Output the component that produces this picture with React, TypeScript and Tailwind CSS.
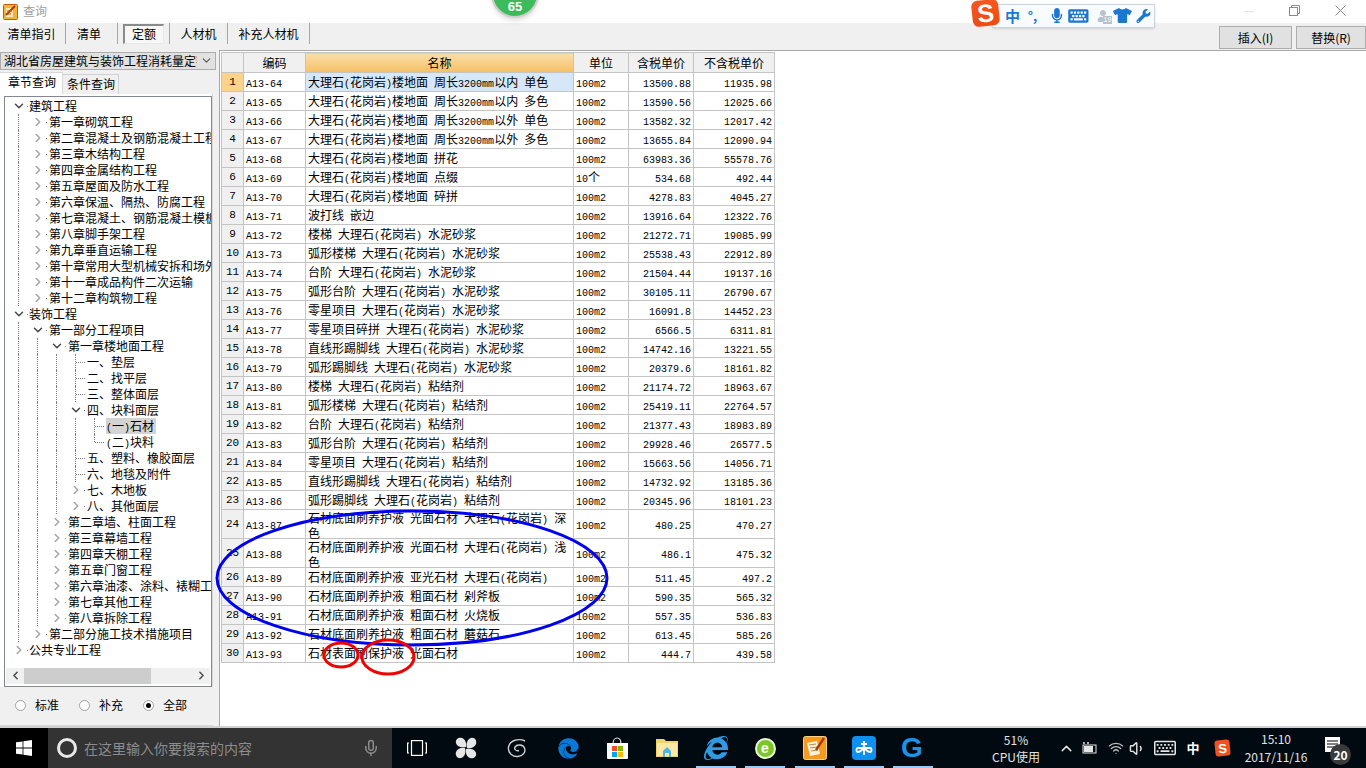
import { ChevronDown, ChevronRight, ChevronLeft, ChevronUp, Mic, Wifi, Volume1 } from 'lucide-react';
import { FaEdge, FaInternetExplorer, FaKeyboard, FaMicrophone, FaRegKeyboard, FaTshirt, FaWrench, FaUser } from 'react-icons/fa';

const cjk = { fontFamily: '"Noto Sans CJK SC", "Noto Sans", sans-serif' };

// half-width ascii runs, the reference uses a 6px wide bitmap font for these
function Mixed({ text }: { text: string }) {
  const parts = text.split(/([\x20-\x7e]+)/).filter(Boolean);
  return (
    <>
      {parts.map((p, i) =>
        /^[\x20-\x7e]+$/.test(p) ? (
          <span key={i} className="font-['Liberation_Mono'] text-[10px] leading-[10px] whitespace-pre-wrap">
            {p}
          </span>
        ) : (
          <span key={i} className="leading-[12px]">{p}</span>
        ),
      )}
    </>
  );
}

type TreeRow = { d: number; a: 'open' | 'closed' | 'none'; t: string; sel?: boolean };

const treeRows: TreeRow[] = [
  { d: 0, a: 'open', t: '建筑工程' },
  { d: 1, a: 'closed', t: '第一章砌筑工程' },
  { d: 1, a: 'closed', t: '第二章混凝土及钢筋混凝土工程' },
  { d: 1, a: 'closed', t: '第三章木结构工程' },
  { d: 1, a: 'closed', t: '第四章金属结构工程' },
  { d: 1, a: 'closed', t: '第五章屋面及防水工程' },
  { d: 1, a: 'closed', t: '第六章保温、隔热、防腐工程' },
  { d: 1, a: 'closed', t: '第七章混凝土、钢筋混凝土模板' },
  { d: 1, a: 'closed', t: '第八章脚手架工程' },
  { d: 1, a: 'closed', t: '第九章垂直运输工程' },
  { d: 1, a: 'closed', t: '第十章常用大型机械安拆和场外' },
  { d: 1, a: 'closed', t: '第十一章成品构件二次运输' },
  { d: 1, a: 'closed', t: '第十二章构筑物工程' },
  { d: 0, a: 'open', t: '装饰工程' },
  { d: 1, a: 'open', t: '第一部分工程项目' },
  { d: 2, a: 'open', t: '第一章楼地面工程' },
  { d: 3, a: 'none', t: '一、垫层' },
  { d: 3, a: 'none', t: '二、找平层' },
  { d: 3, a: 'none', t: '三、整体面层' },
  { d: 3, a: 'open', t: '四、块料面层' },
  { d: 4, a: 'none', t: '(一)石材', sel: true },
  { d: 4, a: 'none', t: '(二)块料' },
  { d: 3, a: 'none', t: '五、塑料、橡胶面层' },
  { d: 3, a: 'none', t: '六、地毯及附件' },
  { d: 3, a: 'closed', t: '七、木地板' },
  { d: 3, a: 'closed', t: '八、其他面层' },
  { d: 2, a: 'closed', t: '第二章墙、柱面工程' },
  { d: 2, a: 'closed', t: '第三章幕墙工程' },
  { d: 2, a: 'closed', t: '第四章天棚工程' },
  { d: 2, a: 'closed', t: '第五章门窗工程' },
  { d: 2, a: 'closed', t: '第六章油漆、涂料、裱糊工程' },
  { d: 2, a: 'closed', t: '第七章其他工程' },
  { d: 2, a: 'closed', t: '第八章拆除工程' },
  { d: 1, a: 'closed', t: '第二部分施工技术措施项目' },
  { d: 0, a: 'closed', t: '公共专业工程' },
];

const hasLaterSibling = (r: number, col: number) => {
  for (let i = r + 1; i < treeRows.length; i++) {
    if (treeRows[i].d < col) return false;
    if (treeRows[i].d === col) return true;
  }
  return false;
};

const quotaRows: [string, string, string, string, string, number?][] = [
  ['A13-64', '大理石(花岗岩)楼地面 周长3200mm以内 单色', '100m2', '13500.88', '11935.98'],
  ['A13-65', '大理石(花岗岩)楼地面 周长3200mm以内 多色', '100m2', '13590.56', '12025.66'],
  ['A13-66', '大理石(花岗岩)楼地面 周长3200mm以外 单色', '100m2', '13582.32', '12017.42'],
  ['A13-67', '大理石(花岗岩)楼地面 周长3200mm以外 多色', '100m2', '13655.84', '12090.94'],
  ['A13-68', '大理石(花岗岩)楼地面 拼花', '100m2', '63983.36', '55578.76'],
  ['A13-69', '大理石(花岗岩)楼地面 点缀', '10个', '534.68', '492.44'],
  ['A13-70', '大理石(花岗岩)楼地面 碎拼', '100m2', '4278.83', '4045.27'],
  ['A13-71', '波打线 嵌边', '100m2', '13916.64', '12322.76'],
  ['A13-72', '楼梯 大理石(花岗岩) 水泥砂浆', '100m2', '21272.71', '19085.99'],
  ['A13-73', '弧形楼梯 大理石(花岗岩) 水泥砂浆', '100m2', '25538.43', '22912.89'],
  ['A13-74', '台阶 大理石(花岗岩) 水泥砂浆', '100m2', '21504.44', '19137.16'],
  ['A13-75', '弧形台阶 大理石(花岗岩) 水泥砂浆', '100m2', '30105.11', '26790.67'],
  ['A13-76', '零星项目 大理石(花岗岩) 水泥砂浆', '100m2', '16091.8', '14452.23'],
  ['A13-77', '零星项目碎拼 大理石(花岗岩) 水泥砂浆', '100m2', '6566.5', '6311.81'],
  ['A13-78', '直线形踢脚线 大理石(花岗岩) 水泥砂浆', '100m2', '14742.16', '13221.55'],
  ['A13-79', '弧形踢脚线 大理石(花岗岩) 水泥砂浆', '100m2', '20379.6', '18161.82'],
  ['A13-80', '楼梯 大理石(花岗岩) 粘结剂', '100m2', '21174.72', '18963.67'],
  ['A13-81', '弧形楼梯 大理石(花岗岩) 粘结剂', '100m2', '25419.11', '22764.57'],
  ['A13-82', '台阶 大理石(花岗岩) 粘结剂', '100m2', '21377.43', '18983.89'],
  ['A13-83', '弧形台阶 大理石(花岗岩) 粘结剂', '100m2', '29928.46', '26577.5'],
  ['A13-84', '零星项目 大理石(花岗岩) 粘结剂', '100m2', '15663.56', '14056.71'],
  ['A13-85', '直线形踢脚线 大理石(花岗岩) 粘结剂', '100m2', '14732.92', '13185.36'],
  ['A13-86', '弧形踢脚线 大理石(花岗岩) 粘结剂', '100m2', '20345.96', '18101.23'],
  ['A13-87', '石材底面刷养护液 光面石材 大理石(花岗岩) 深色', '100m2', '480.25', '470.27', 29],
  ['A13-88', '石材底面刷养护液 光面石材 大理石(花岗岩) 浅色', '100m2', '486.1', '475.32', 29],
  ['A13-89', '石材底面刷养护液 亚光石材 大理石(花岗岩)', '100m2', '511.45', '497.2'],
  ['A13-90', '石材底面刷养护液 粗面石材 剁斧板', '100m2', '590.35', '565.32'],
  ['A13-91', '石材底面刷养护液 粗面石材 火烧板', '100m2', '557.35', '536.83'],
  ['A13-92', '石材底面刷养护液 粗面石材 蘑菇石', '100m2', '613.45', '585.26'],
  ['A13-93', '石材表面刷保护液 光面石材', '100m2', '444.7', '439.58'],
];

function Tree() {
  return (
    <div className="pl-1 pt-px flex-1 overflow-hidden">
      {treeRows.map((row, r) => (
        <div key={r} className="flex items-center h-4 whitespace-nowrap text-[12px] text-black leading-4">
          {Array.from({ length: row.d + 1 }).map((_, c) => {
            if (c === row.d) {
              if (row.a === 'none') {
                const more = hasLaterSibling(r, c);
                return (
                  <div key={c} className="relative w-[19px] h-4 shrink-0">
                    <div className={`ml-[9px] border-l border-dotted border-[#808080] ${more ? 'h-4' : 'h-2'}`} />
                    <div className="absolute left-[10px] top-2 w-[9px] border-t border-dotted border-[#808080]" />
                  </div>
                );
              }
              return (
                <div key={c} className="relative flex items-center justify-center w-[19px] h-4 shrink-0">
                  {row.a === 'open' ? (
                    <ChevronDown size={14} strokeWidth={2.6} className="text-[#4a4a4a]" />
                  ) : (
                    <ChevronRight size={14} strokeWidth={2.6} className="text-[#a6a6a6]" />
                  )}
                  <div className="absolute right-0 top-2 w-px h-px bg-[#808080]" />
                </div>
              );
            }
            return (
              <div key={c} className="w-[19px] h-4 shrink-0">
                {hasLaterSibling(r, c) && <div className="ml-[9px] h-4 border-l border-dotted border-[#808080]" />}
              </div>
            );
          })}
          <span className={`${row.d > 0 ? 'ml-[2px]' : 'ml-px'} ${row.sel ? 'bg-[#d4d4d4] pr-[2px]' : ''} h-4`}>
            <Mixed text={row.t} />
          </span>
        </div>
      ))}
    </div>
  );
}

function LeftPanel() {
  return (
    <div className="w-[219px] shrink-0 flex flex-col bg-[#f0f0f0] pt-[2px]">
      <div className="flex items-center justify-between w-[216px] h-[18px] bg-[#e1e1e1] border border-[#adadad] pl-[3px] pr-[2px] overflow-hidden">
        <span className="text-[12px] leading-4 whitespace-nowrap overflow-hidden w-[193px]">湖北省房屋建筑与装饰工程消耗量定额</span>
        <ChevronDown size={13} className="text-[#555] shrink-0" />
      </div>
      <div className="flex items-end h-[22px] mt-[2px] text-[12px] leading-4">
        <div className="w-[63px] h-[22px] bg-white pl-[8px] pt-[1px] border-t border-r border-[#d9d9d9]">章节查询</div>
        <div className="w-[56px] h-[20px] bg-[#f0f0f0] pl-[4px] pt-[1px] border-t border-r border-[#d0d0d0]">条件查询</div>
      </div>
      <div className="w-[213px] h-[635px] bg-white border-r border-b border-[#d9d9d9] pl-1 pt-[2px] flex flex-col">
        <div className="w-[208px] h-[591px] border border-[#828790] flex flex-col overflow-hidden">
          <Tree />
          <div className="flex items-center h-[16px] mb-[2px] mx-[1px] bg-[#f0f0f0]">
            <div className="w-[18px] flex justify-center">
              <ChevronLeft size={13} strokeWidth={3} className="text-[#505050]" />
            </div>
            <div className="w-[127px] h-[16px] bg-[#cdcdcd]" />
            <div className="flex-1" />
            <div className="w-[18px] flex justify-center">
              <ChevronRight size={13} strokeWidth={3} className="text-[#505050]" />
            </div>
          </div>
        </div>
        <div className="flex items-center h-[38px] bg-[#f0f0f0] -ml-1 -mr-px pl-[15px] pb-[1px] text-[12px]">
          {['标准', '补充', '全部'].map((label, i) => (
            <div key={label} className="flex items-center w-[64px]">
              <div className="flex items-center justify-center w-[11px] h-[11px] rounded-full border border-[#a0a0a0] bg-white mr-[8px]">
                {i === 2 && <div className="w-[5px] h-[5px] rounded-full bg-black" />}
              </div>
              <span className="ml-px">{label}</span>
            </div>
          ))}
        </div>
      </div>
    </div>
  );
}

function QuotaTable() {
  const cell = 'border border-[#c4c4c4] p-0 align-middle';
  const head = `${cell} bg-[#f0f0f0] text-center text-[12px] font-normal`;
  return (
    <table className="table-fixed border-collapse w-[553px] ml-px mt-px text-[12px] leading-[13px] text-black">
      <colgroup>
        <col className="w-[22px]" />
        <col className="w-[62px]" />
        <col className="w-[268px]" />
        <col className="w-[55px]" />
        <col className="w-[65px]" />
        <col className="w-[81px]" />
      </colgroup>
      <thead>
        <tr className="h-[20px]">
          <th className={head} />
          <th className={head}>编码</th>
          <th className={`${cell} text-center text-[12px] font-normal bg-gradient-to-b from-[#fadfa8] to-[#f5bf62]`}>名称</th>
          <th className={head}>单位</th>
          <th className={head}>含税单价</th>
          <th className={head}>不含税单价</th>
        </tr>
      </thead>
      <tbody>
        {quotaRows.map((row, i) => (
          <tr key={row[0]} className={row[5] === 29 ? 'h-[29px]' : 'h-[19px]'}>
            <td className={`${cell} text-center font-['Liberation_Mono'] text-[11px] ${i === 0 ? 'bg-[#fbd38c]' : 'bg-[#f0f0f0]'}`}>{i + 1}</td>
            <td className={`${cell} pl-[2px]`}>
              <Mixed text={row[0]} />
            </td>
            <td className={`${cell} pl-[2px] pr-[2px] ${i === 0 ? 'bg-[#d6e8f8]' : ''}`}>
              <div className="leading-[13px] -mb-px">
                <Mixed text={row[1]} />
              </div>
            </td>
            <td className={`${cell} pl-[2px]`}>
              <Mixed text={row[2]} />
            </td>
            <td className={`${cell} pr-[2px] text-right`}>
              <Mixed text={row[3]} />
            </td>
            <td className={`${cell} pr-[2px] text-right`}>
              <Mixed text={row[4]} />
            </td>
          </tr>
        ))}
      </tbody>
    </table>
  );
}

function Toolbar() {
  const tabs: [string, number, string, boolean?][] = [
    ['清单指引', 66, 'pr-[2px]'],
    ['清单', 52, 'pr-[5px]'],
    ['定额', 52, '', true],
    ['人材机', 58, ''],
    ['补充人材机', 82, ''],
  ];
  return (
    <div className="flex items-start h-[27px] bg-[#f0f0f0] text-[12px] text-black">
      {tabs.map(([label, w, pad, pressed]) => (
        <div key={label} className={`flex items-center justify-center h-[21px] border-r border-[#a6a6a6] ${pad}`} style={{ width: w }}>
          {pressed ? (
            <div className="w-[41px] h-[20px] flex items-center justify-center border border-t-2 border-l-2 border-[#8a8a8a] border-r-[#e8e8e8] border-b-[#e8e8e8] bg-[#f7f7f7]">
              {label}
            </div>
          ) : (
            label
          )}
        </div>
      ))}
      <div className="flex-1" />
      <div className="flex items-center justify-center w-[73px] h-[23px] mt-[3px] bg-[#e1e1e1] border border-[#adadad] mr-[4px]">
        插入(I)
      </div>
      <div className="flex items-center justify-center w-[70px] h-[23px] mt-[3px] bg-[#e1e1e1] border border-[#adadad]">替换(R)</div>
    </div>
  );
}

function TitleBar() {
  return (
    <div className="flex items-center h-[23px] bg-white pl-[3px] shrink-0">
      <svg width="15" height="16" viewBox="0 0 15 16">
        <rect x="0.5" y="0.5" width="14" height="15" rx="1" fill="#f7b23b" stroke="#c8560c" />
        <rect x="3" y="4" width="7" height="9" fill="#fde9b8" />
        <path d="M3 11 L12 2" stroke="#a83a0a" strokeWidth="2" />
        <path d="M4 7 h5 M4 10 h4" stroke="#c8560c" />
      </svg>
      <span className="ml-[5px] text-[12px] text-[#a0a0a0] pb-[2px]">查询</span>
      <div className="flex-1" />
      <div className="w-[10px] h-px bg-[#e4e4e4] mr-[35px]" />
      <svg width="11" height="11" viewBox="0 0 11 11" className="mr-[35px] mb-[2px]" fill="none" stroke="#8a8a8a">
        <rect x="0.5" y="2.5" width="8" height="8" />
        <path d="M2.5 2.5 V0.5 H10.5 V8.5 H8.5" />
      </svg>
      <svg width="11" height="11" viewBox="0 0 11 11" className="mr-[20px] mb-[2px]" stroke="#8a8a8a">
        <path d="M0.5 0.5 L10.5 10.5 M10.5 0.5 L0.5 10.5" />
      </svg>
    </div>
  );
}

function SogouBar() {
  return (
    <div className="absolute left-[972px] top-0 flex items-center h-[28px]">
      <div className="absolute left-0 top-0 flex items-center justify-center w-[27px] h-[26px] rounded-[6px] -rotate-6 bg-gradient-to-b from-[#f4581f] to-[#ef4a14] text-white font-black text-[25px] leading-none font-['Liberation_Sans'] z-10">
        S
      </div>
      <div className="flex items-center ml-[20px] mt-[3px] h-[24px] w-[163px] bg-[#f8fbff] border border-[#c8d6e4] text-[#1c78cf] shadow-sm">
        <span className="ml-[12px] w-[22px] text-[15px] font-bold leading-none">中</span>
        <span className="w-[21px] text-[13px] font-bold leading-none pl-[2px]">°,</span>
        <FaMicrophone size={15} className="ml-[1px] w-[21px]" />
        <FaKeyboard size={18} className="ml-0 w-[24px]" />
        <div className="relative ml-[4px] w-[20px] flex justify-center text-[#b6c2cc]">
          <FaUser size={12} />
          <span className="absolute right-0 bottom-[-2px] px-px bg-[#b6c2cc] text-white text-[7px] leading-[8px] font-['Liberation_Sans']">19</span>
        </div>
        <FaTshirt size={15} className="w-[22px]" />
        <FaWrench size={14} className="w-[22px]" />
      </div>
    </div>
  );
}

function TaskIcon({ w, running, children }: { w: number; running?: boolean; children: React.ReactNode }) {
  return (
    <div className="relative flex items-center justify-center h-full shrink-0" style={{ width: w }}>
      {children}
      {running && <div className="absolute bottom-0 left-[5px] w-[40px] h-[2px] bg-[#99c9f5]" />}
    </div>
  );
}

function Taskbar() {
  return (
    <div className="flex items-center h-[40px] bg-[#000a10] text-[#e4e4e4] shrink-0">
      <div className="flex items-center justify-center w-[48px] h-full bg-black">
        <svg width="16" height="16" viewBox="0 0 16 16" fill="#fff">
          <path d="M0 2.3 L6.6 1.4 V7.5 H0 Z M7.4 1.3 L16 0 V7.5 H7.4 Z M0 8.4 H6.6 V14.6 L0 13.7 Z M7.4 8.4 H16 V16 L7.4 14.7 Z" />
        </svg>
      </div>
      <div className="flex items-center w-[344px] h-full bg-[#333333] pl-[9px]">
        <div className="w-[20px] h-[20px] rounded-full border-[3px] border-[#e8e8e8]" />
        <span className="ml-[7px] flex-1 text-[14px] leading-none text-[#8c8c8c]">在这里输入你要搜索的内容</span>
        <Mic size={18} className="mr-[12px] text-[#8c8c8c]" />
      </div>
      <TaskIcon w={49}>
        <svg width="20" height="16" viewBox="0 0 20 16" fill="none" stroke="#fff" strokeWidth="1.2">
          <rect x="4.5" y="0.6" width="11" height="14.8" />
          <path d="M2 3 H0.6 V13 H2 M18 3 H19.4 V13 H18" />
        </svg>
      </TaskIcon>
      <TaskIcon w={50}>
        <svg width="22" height="22" viewBox="0 0 22 22" fill="#e6e6e6">
          <path d="M11 10 C7 11 2 10 1 6 C0 2 4 0 7 1 C10 2 12 6 11 10 Z" />
          <path d="M12 11 C11 7 12 2 16 1 C20 0 22 4 21 7 C20 10 16 12 12 11 Z" />
          <path d="M11 12 C15 11 20 12 21 16 C22 20 18 22 15 21 C12 20 10 16 11 12 Z" />
          <path d="M10 11 C11 15 10 20 6 21 C2 22 0 18 1 15 C2 12 6 10 10 11 Z" />
        </svg>
      </TaskIcon>
      <TaskIcon w={52}>
        <svg width="20" height="20" viewBox="0 0 20 20" fill="none" stroke="#cfcfcf" strokeWidth="1.4">
          <path d="M18 3 C12 0 3 2 1.5 9 C0.5 15 6 19 11 18.5 C16 18 19 14 17.5 10 C16 6.5 10 6 8 9 C7 11 9 13.5 12 12.5" />
        </svg>
      </TaskIcon>
      <TaskIcon w={50}>
        <FaEdge size={21} className="text-[#0a78d7]" />
      </TaskIcon>
      <TaskIcon w={49}>
        <svg width="23" height="24" viewBox="0 0 23 24">
          <path d="M7 8 C7 0 15 0 15 8" fill="none" stroke="#e8e8e8" strokeWidth="1.2" />
          <path d="M1 7 H22 V22 a1 1 0 0 1 -1 1 H2 a1 1 0 0 1 -1 -1 Z" fill="#fff" />
          <rect x="6" y="10" width="5" height="5" fill="#f25022" />
          <rect x="12" y="10" width="5" height="5" fill="#7fba00" />
          <rect x="6" y="16" width="5" height="5" fill="#00a4ef" />
          <rect x="12" y="16" width="5" height="5" fill="#ffb900" />
        </svg>
      </TaskIcon>
      <TaskIcon w={49}>
        <svg width="22" height="20" viewBox="0 0 22 20">
          <path d="M0 1 H8 L10 3 H22 V19 H0 Z" fill="#f3d26b" />
          <rect x="1" y="5" width="20" height="13" fill="#fbe8a6" />
          <path d="M7 19 V13 L11 9 L15 13 V19 H13 V15 H9 V19 Z" fill="#4cb5e8" />
        </svg>
      </TaskIcon>
      <TaskIcon w={49} running>
        <FaInternetExplorer size={24} className="text-[#2f9be4]" />
      </TaskIcon>
      <TaskIcon w={50} running>
        <div className="flex items-center justify-center w-[21px] h-[21px] rounded-full bg-[#7cc62b] border-2 border-[#eaf6d8] text-white text-[14px] font-bold leading-none font-['Liberation_Sans']">
          e
        </div>
      </TaskIcon>
      <TaskIcon w={49} running>
        <svg width="24" height="24" viewBox="0 0 24 24">
          <rect x="0.5" y="0.5" width="23" height="23" rx="2" fill="#f59a1f" stroke="#ffd27a" />
          <path d="M4 7 L14 5 L17 18 L7 20 Z" fill="#fdf3dc" />
          <path d="M6 9 L13 8 M7 12 L14 11 M8 15 L15 14" stroke="#b88a4a" />
          <path d="M13 14 L21 2" stroke="#a83a0a" strokeWidth="2.4" />
        </svg>
      </TaskIcon>
      <TaskIcon w={49} running>
        <svg width="24" height="24" viewBox="0 0 24 24">
          <rect width="24" height="24" rx="4" fill="#0f8ff0" />
          <path d="M12 5 V19 M9 8 H15 M6 12 C4 12 4 16 6 16 C8 16 10 14 12 12 C14 14 16 16 18 16 C20 16 20 12 18 12 H6" fill="none" stroke="#fff" strokeWidth="1.8" />
        </svg>
      </TaskIcon>
      <TaskIcon w={48} running>
        <span className="text-[#1a93e8] text-[28px] font-black leading-none font-['Liberation_Sans']">G</span>
      </TaskIcon>
      <div className="w-[49px] shrink-0" />
      <div className="w-[62px] shrink-0 flex flex-col items-center text-[12px] leading-[17px]">
        <span>51%</span>
        <span>CPU使用</span>
      </div>
      <div className="w-[9px] shrink-0" />
      <div className="w-[20px] flex justify-center shrink-0">
        <ChevronUp size={17} />
      </div>
      <div className="w-[28px] flex justify-center shrink-0">
        <svg width="16" height="12" viewBox="0 0 16 12" fill="#e4e4e4">
          <path d="M2 0 V2 M6 0 V2" stroke="#e4e4e4" strokeWidth="1.5" />
          <rect x="1" y="3" width="13" height="8" fill="none" stroke="#e4e4e4" />
          <rect x="2" y="4" width="9" height="6" />
        </svg>
      </div>
      <div className="w-[24px] flex justify-center shrink-0">
        <Wifi size={16} className="text-[#bdbdbd]" />
      </div>
      <div className="w-[18px] flex justify-center shrink-0">
        <Volume1 size={17} />
      </div>
      <div className="w-[38px] flex justify-center shrink-0">
        <FaRegKeyboard size={22} />
      </div>
      <div className="w-[18px] text-center text-[13px] font-bold text-white shrink-0">中</div>
      <div className="w-[40px] flex justify-center shrink-0">
        <div className="flex items-center justify-center w-[15px] h-[16px] rounded-[3px] -rotate-6 bg-[#f0521a] text-white font-black text-[13px] leading-none font-['Liberation_Sans']">
          S
        </div>
      </div>
      <div className="w-[68px] flex flex-col items-center text-[12px] leading-[18px] shrink-0">
        <span>15:10</span>
        <span>2017/11/16</span>
      </div>
      <div className="relative flex-1 h-full">
        <svg width="15" height="15" viewBox="0 0 15 15" className="absolute left-[15px] top-[9px]">
          <rect width="15" height="15" fill="#fff" />
          <path d="M2 4 H13 M2 7 H13 M2 10 H9" stroke="#000" />
        </svg>
        <div className="absolute left-[20px] top-[16px] flex items-center justify-center w-[21px] h-[21px] rounded-full bg-[#3a3a3a] text-white text-[12px] font-bold leading-none">
          20
        </div>
      </div>
    </div>
  );
}

export default function App() {
  return (
    <div className="relative flex flex-col w-[1366px] h-[768px] overflow-hidden bg-white text-black" style={cjk}>
      <TitleBar />
      <Toolbar />
      <div className="flex flex-1 min-h-0 bg-[#f0f0f0]">
        <LeftPanel />
        <div className="flex-1 bg-white border-l border-t border-[#a8a8a8]">
          <QuotaTable />
        </div>
      </div>
      <div className="h-[2px] bg-[#d0d0d0] shrink-0" />
      <Taskbar />

      {/* floating things that sit over the window */}
      <div className="absolute left-[491px] top-[-30px] flex items-end justify-center w-[48px] h-[48px] rounded-full bg-[#3dbb5a] border-2 border-[#cfcfcf] shadow-md pb-[3px] text-white font-bold text-[13px] leading-none font-['Liberation_Sans']">
        65
      </div>
      <SogouBar />
      <svg className="absolute left-0 top-0 pointer-events-none" width="1366" height="768" fill="none">
        <ellipse cx="412" cy="578" rx="195" ry="67" stroke="#0000f0" strokeWidth="3" />
        <ellipse cx="341" cy="655" rx="17" ry="12" stroke="#f00000" strokeWidth="3" />
        <ellipse cx="388" cy="657" rx="26" ry="17" stroke="#f00000" strokeWidth="3" />
      </svg>
    </div>
  );
}
